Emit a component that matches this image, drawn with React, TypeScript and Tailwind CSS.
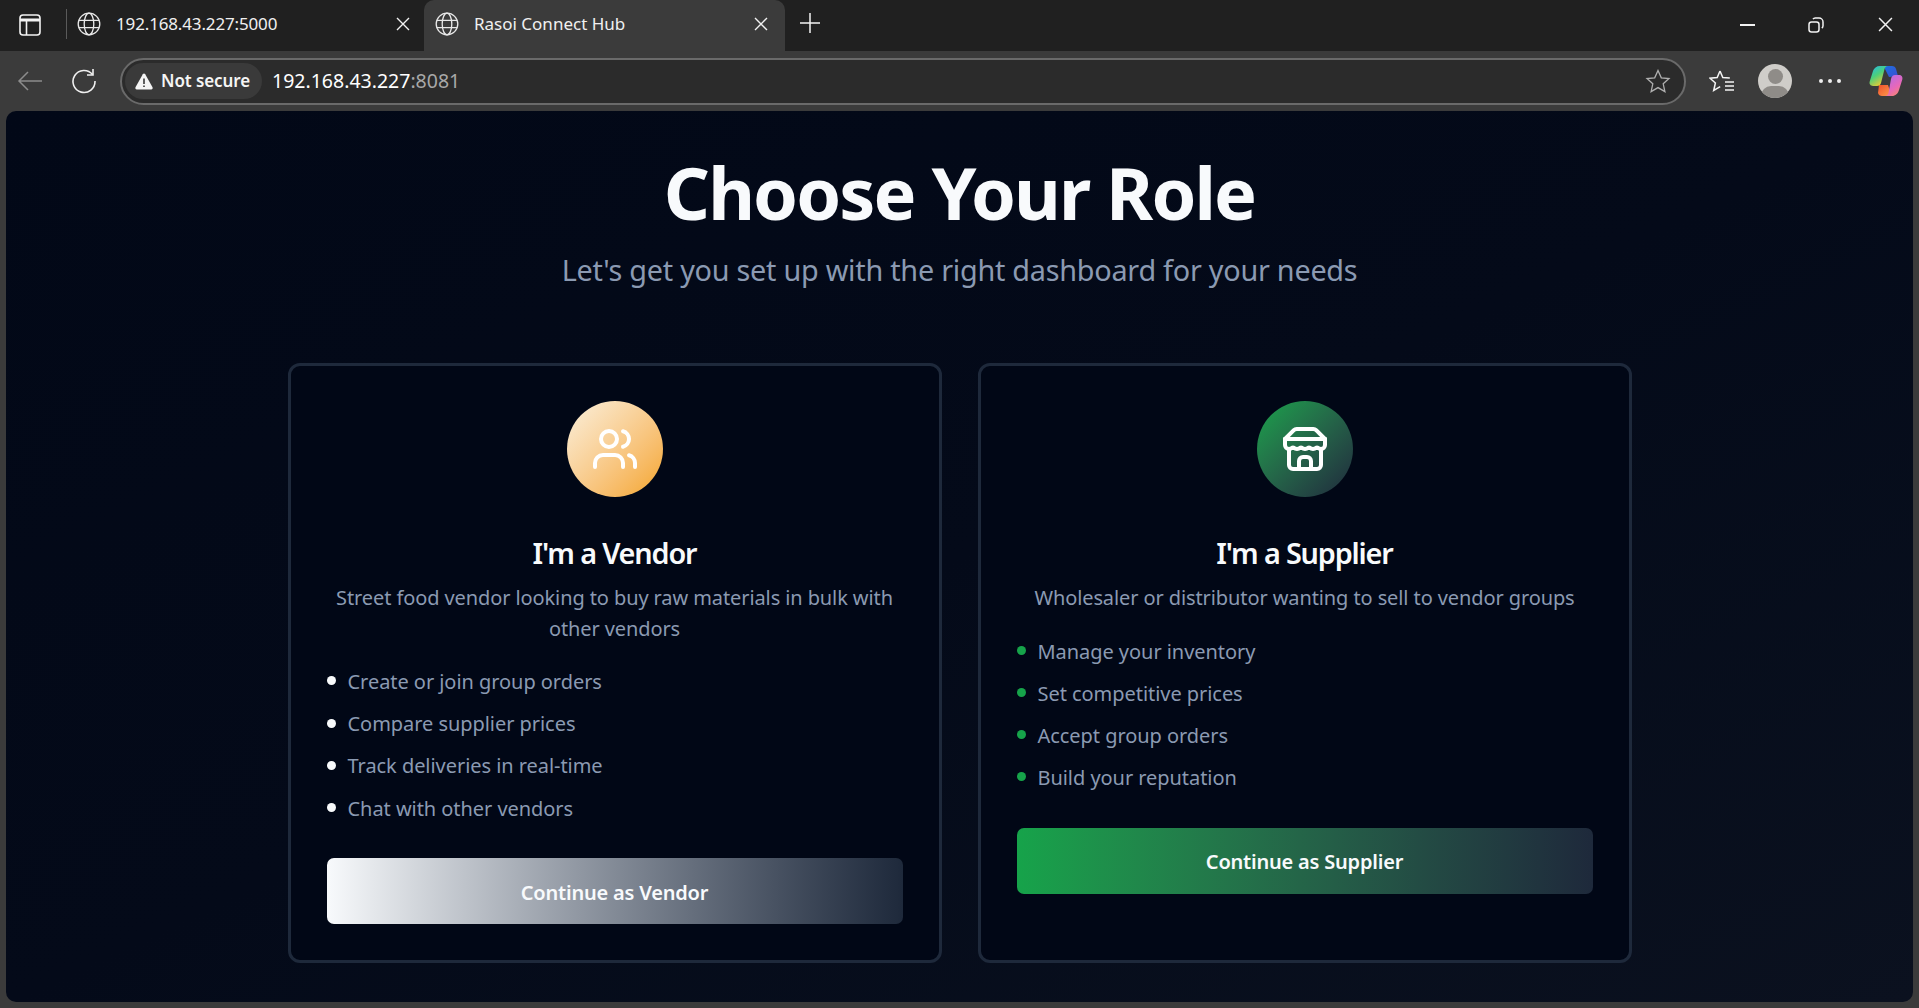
import { Users } from "lucide-react";

const sans = "font-['Noto_Sans','Open_Sans',sans-serif]";

const Globe = () => (
    <svg width="24" height="24" viewBox="0 0 24 24" fill="none" stroke="#e8e8e8" strokeWidth="1.3" className="shrink-0">
        <circle cx="12" cy="12" r="10.8" />
        <ellipse cx="12" cy="12" rx="4.8" ry="10.8" />
        <path d="M1.8 8.3h20.4M1.8 15.7h20.4" />
    </svg>
);

const CloseIcon = ({ size = 14 }: { size?: number }) => (
    <svg width={size} height={size} viewBox="0 0 14 14" stroke="#f2f2f2" strokeWidth="1.4" className="shrink-0">
        <path d="M1 1l12 12M13 1L1 13" />
    </svg>
);

// the older lucide store glyph, the one with the scalloped awning
const StoreIcon = () => (
    <svg width="48" height="48" viewBox="0 0 24 24" fill="none" stroke="#ffffff" strokeWidth="2" strokeLinecap="round" strokeLinejoin="round">
        <path d="m2 7 4.41-4.41A2 2 0 0 1 7.83 2h8.34a2 2 0 0 1 1.42.59L22 7" />
        <path d="M4 12v8a2 2 0 0 0 2 2h12a2 2 0 0 0 2-2v-8" />
        <path d="M15 22v-4a2 2 0 0 0-2-2h-2a2 2 0 0 0-2 2v4" />
        <path d="M2 7h20" />
        <path d="M22 7v3a2 2 0 0 1-2 2v0a2.7 2.7 0 0 1-1.59-.63.7.7 0 0 0-.82 0A2.7 2.7 0 0 1 16 12a2.7 2.7 0 0 1-1.59-.63.7.7 0 0 0-.82 0A2.7 2.7 0 0 1 12 12a2.7 2.7 0 0 1-1.59-.63.7.7 0 0 0-.82 0A2.7 2.7 0 0 1 8 12a2.7 2.7 0 0 1-1.59-.63.7.7 0 0 0-.82 0A2.7 2.7 0 0 1 4 12v0a2 2 0 0 1-2-2V7" />
    </svg>
);

const Copilot = () => (
    <svg width="34" height="32" viewBox="0 0 34 32">
        <defs>
            <linearGradient id="cpa" x1="0" y1="0" x2="0.6" y2="1">
                <stop offset="0" stopColor="#22b8f0" />
                <stop offset="0.5" stopColor="#4cd07a" />
                <stop offset="1" stopColor="#f5c92f" />
            </linearGradient>
            <linearGradient id="cpb" x1="0.2" y1="0" x2="0.8" y2="1">
                <stop offset="0" stopColor="#b26be8" />
                <stop offset="0.6" stopColor="#e868b8" />
                <stop offset="1" stopColor="#f88a6a" />
            </linearGradient>
            <linearGradient id="cpc" x1="0" y1="0" x2="1" y2="1">
                <stop offset="0" stopColor="#1d6fe0" />
                <stop offset="1" stopColor="#3b4fd0" />
            </linearGradient>
            <linearGradient id="cpd" x1="0" y1="0" x2="1" y2="1">
                <stop offset="0" stopColor="#f0502c" />
                <stop offset="1" stopColor="#fb9a4a" />
            </linearGradient>
        </defs>
        <path d="M18 1h5c2 0 3.5 1.3 4 3l2 7-9 1-4-8c-.7-1.5.4-3 2-3z" fill="url(#cpc)" />
        <path d="M10 20h9l2 6c.8 3-1 5-4 5h-4c-2 0-3.5-1.3-4-3z" fill="url(#cpd)" />
        <path d="M11 1h8c-2 0-3 1.4-3.5 3L12 18c-.5 2-2 3-4 3H4c-2.5 0-4-2-3.3-4.4L4 6c1-3 3.5-5 7-5z" fill="url(#cpa)" />
        <path d="M26 10h4c2.5 0 4 2 3.3 4.4L30 25c-1 3.5-3.5 6-7 6h-7c2 0 3-1.4 3.5-3L22 14c.5-2.5 2-4 4-4z" fill="url(#cpb)" />
    </svg>
);

const Toolbar = () => (
    <div className="h-[60px] bg-[#3b3b3b] flex items-center shrink-0">
        <svg width="26" height="22" viewBox="0 0 26 22" fill="none" stroke="#8c8c8c" strokeWidth="1.5" className="ml-[17px] shrink-0">
            <path d="M25 11H2M11 2l-9 9 9 9" />
        </svg>
        <svg width="26" height="26" viewBox="0 0 26 26" fill="none" stroke="#f0f0f0" strokeWidth="1.6" className="ml-[28px] shrink-0">
            <path d="M21.5 6.5A11 11 0 1 0 24 13" />
            <path d="M22 1v6h-6" />
        </svg>
        <div className="ml-[23px] w-[1566px] h-[47px] rounded-full border-2 border-[#6a6a6a] bg-[#2b2b2b] flex items-center pl-[3px] pr-[13px]">
            <div className="h-[36px] w-[137px] rounded-full bg-[#3a3a3a] flex items-center pl-[10px] gap-[8px] shrink-0">
                <svg width="18" height="17" viewBox="0 0 18 17" className="shrink-0">
                    <path d="M9 .5c.5 0 .9.3 1.2.8l7.3 13c.5 1-.1 2.2-1.2 2.2H1.7C.6 16.5 0 15.3.5 14.3l7.300-13C8.100.8 8.500.5 9 .5z" fill="#f5f5f5" />
                    <path d="M9 5.500v5.500M9 12.500v1.500" stroke="#3a3a3a" strokeWidth="1.6" />
                </svg>
                <span className="text-[17px] font-semibold text-[#f5f5f5] tracking-[-0.1px] whitespace-nowrap">Not secure</span>
            </div>
            <div className="ml-[10px] text-[19.5px] text-white whitespace-nowrap">
                192.168.43.227<span className="text-[#a8a8a8]">:8081</span>
            </div>
            <svg width="26" height="25" viewBox="0 0 26 25" fill="none" stroke="#b0b0b0" strokeWidth="1.3" className="ml-auto shrink-0">
                <path d="M13 1.500l3.300 7.300 7.700.8-5.800 5.200 1.700 7.800-6.900-4-6.900 4 1.700-7.800L2 9.600l7.700-.8z" />
            </svg>
        </div>
        <svg width="26" height="26" viewBox="0 0 26 26" fill="none" stroke="#f4f4f4" strokeWidth="1.5" className="ml-[23px] shrink-0">
            <path d="M11 2l2.800 6.500 7 .6M11 2L8.200 8.500l-7.200.7 5.400 4.800L4.700 21.500l6.500-3.800M16 13h9M16 17h9M16 21h9" transform="translate(0 1)" />
        </svg>
        <div className="ml-[23px] w-[34px] h-[34px] rounded-full bg-[#cfcdc9] overflow-hidden flex flex-col items-center shrink-0">
            <div className="w-[15px] h-[15px] rounded-full bg-[#8f8c88] mt-[5px] shrink-0" />
            <div className="w-[28px] h-[20px] rounded-full bg-[#8f8c88] mt-[2px] shrink-0" />
        </div>
        <div className="ml-[27px] flex gap-[5px] shrink-0">
            <div className="w-[4px] h-[4px] rounded-full bg-[#eeeeee]" />
            <div className="w-[4px] h-[4px] rounded-full bg-[#eeeeee]" />
            <div className="w-[4px] h-[4px] rounded-full bg-[#eeeeee]" />
        </div>
        <div className="ml-[28px] shrink-0 flex">
            <Copilot />
        </div>
    </div>
);

const TabStrip = () => (
    <div className="h-[51px] bg-[#202020] flex shrink-0">
        <div className="w-[66px] flex items-center pb-[2px] shrink-0">
            <svg width="22" height="22" viewBox="0 0 22 22" fill="none" stroke="#f2f2f2" strokeWidth="1.6" className="ml-[19px]">
                <rect x="1" y="1" width="20" height="20" rx="3" />
                <path d="M1 6h20" strokeWidth="3" />
                <path d="M7.5 6v15" />
            </svg>
        </div>
        <div className="w-px h-[30px] bg-[#5a5a5a] mt-[9px] shrink-0" />
        <div className="w-[357px] flex items-center pl-[10px] pb-[3px] shrink-0">
            <Globe />
            <span className="ml-[15px] text-[17px] tracking-[-0.15px] text-[#f0f0f0] whitespace-nowrap">192.168.43.227:5000</span>
            <span className="ml-auto mr-[14px] flex"><CloseIcon /></span>
        </div>
        <div className="w-[361px] bg-[#3b3b3b] rounded-t-[10px] flex items-center pl-[11px] pb-[3px] shrink-0">
            <Globe />
            <span className="ml-[15px] text-[17px] text-[#f0f0f0] whitespace-nowrap">Rasoi Connect Hub</span>
            <span className="ml-auto mr-[17px] flex"><CloseIcon /></span>
        </div>
        <svg width="22" height="22" viewBox="0 0 22 22" stroke="#f2f2f2" strokeWidth="1.5" className="ml-[14px] mt-[12px] shrink-0">
            <path d="M11 1v20M1 11h20" />
        </svg>
        <div className="ml-auto flex items-center pr-[26px] pb-[2px] shrink-0">
            <div className="w-[15px] h-[2px] bg-[#f2f2f2]" />
            <svg width="16" height="16" viewBox="0 0 16 16" fill="none" stroke="#f2f2f2" strokeWidth="1.5" className="ml-[53px]">
                <rect x="1" y="5" width="10" height="10" rx="2.5" />
                <path d="M5 2.200C5.500 1.400 6.300 1 7.200 1H11c2.200 0 4 1.800 4 4v3.800c0 .9-.4 1.700-1.200 2.200" />
            </svg>
            <span className="ml-[54px] flex"><CloseIcon size={15} /></span>
        </div>
    </div>
);

const roles = [
    {
        title: "I'm a Vendor",
        desc: "Street food vendor looking to buy raw materials in bulk with other vendors",
        items: ["Create or join group orders", "Compare supplier prices", "Track deliveries in real-time", "Chat with other vendors"],
        cta: "Continue as Vendor",
        icon: <Users size={48} color="#ffffff" strokeWidth={2} />,
        circle: "bg-gradient-to-br from-[#faf0dc] to-[#f4a51a]",
        dot: "bg-[#f8fafc]",
        button: "bg-gradient-to-r from-[#f8fafc] to-[#1e293b]",
    },
    {
        title: "I'm a Supplier",
        desc: "Wholesaler or distributor wanting to sell to vendor groups",
        items: ["Manage your inventory", "Set competitive prices", "Accept group orders", "Build your reputation"],
        cta: "Continue as Supplier",
        icon: <StoreIcon />,
        circle: "bg-gradient-to-br from-[#16a34a] to-[#1e293b]",
        dot: "bg-[#16a34a]",
        button: "bg-gradient-to-r from-[#16a34a] to-[#1e293b]",
    },
];

export default function App() {
    return (
        <div className={`h-screen w-full overflow-hidden bg-[#3b3b3b] flex flex-col ${sans}`}>
            <TabStrip />
            <Toolbar />
            <div className="flex-1 mx-[6px] mb-[6px] rounded-[10px] overflow-hidden bg-gradient-to-br from-[#020817] via-[#040a19] to-[#0b111f] flex flex-col items-center">
                <h1 className="mt-[45px] text-[72px] leading-[72px] font-bold text-[#f8fafc] tracking-[-1.9px]">Choose Your Role</h1>
                <p className="mt-[23px] text-[28.8px] leading-[38px] text-[#8b9ab2] tracking-[-0.25px]">Let's get you set up with the right dashboard for your needs</p>
                <div className="mt-[74px] w-[1344px] grid grid-cols-2 gap-[36px]">
                    {roles.map((r) => (
                        <div key={r.title} className="h-[600px] rounded-[12px] border-[3px] border-[#1e293b] bg-[#010716] px-[36px] pt-[35px] flex flex-col">
                            <div className={`w-[96px] h-[96px] rounded-full self-center flex items-center justify-center shrink-0 ${r.circle}`}>
                                {r.icon}
                            </div>
                            <h2 className="mt-[37px] text-center text-[28.8px] leading-[38px] font-semibold text-[#f8fafc] tracking-[-1.15px]">{r.title}</h2>
                            <p className="mt-[11px] text-center text-[20px] leading-[30.5px] text-[#8b9ab2] tracking-[-0.1px]">{r.desc}</p>
                            <ul className="mt-[24px] flex flex-col gap-[13.4px]">
                                {r.items.map((it) => (
                                    <li key={it} className="flex items-center gap-[12px] text-[20px] leading-[28.8px] text-[#8b9ab2] tracking-[-0.05px]">
                                        <span className={`w-[9px] h-[9px] rounded-full shrink-0 -mt-[3px] ${r.dot}`} />
                                        {it}
                                    </li>
                                ))}
                            </ul>
                            <button className={`mt-[35px] h-[66px] w-full pt-[3px] rounded-[7px] text-[20px] font-semibold text-[#f8fafc] tracking-[-0.2px] shrink-0 ${r.button}`}>{r.cta}</button>
                        </div>
                    ))}
                </div>
            </div>
        </div>
    );
}
